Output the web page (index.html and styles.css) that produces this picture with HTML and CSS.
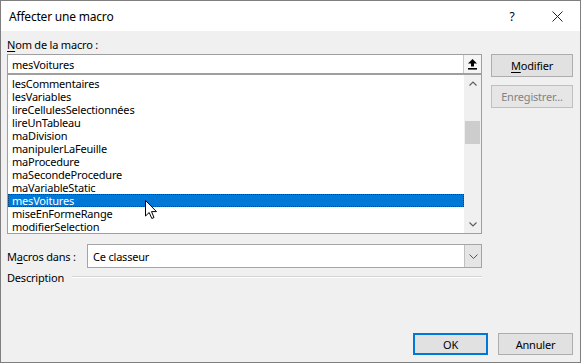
FILE: index.html
```html
<!DOCTYPE html>
<html lang="fr">
<head>
    <meta charset="UTF-8">
    <meta name="viewport" content="width=device-width, initial-scale=1.0">
    <title>Affecter une macro</title>
    <link rel="stylesheet" href="styles.css">
</head>
<body>
    <div class="dialog">
        <div class="titlebar">
            <span class="title">Affecter une macro</span>
            <span class="help">?</span>
            <span class="close">
                <svg width="11" height="11" viewBox="0 0 11 11"><path d="M0.5 0.5 L10.5 10.5 M10.5 0.5 L0.5 10.5" stroke="#222" stroke-width="1" fill="none"/></svg>
            </span>
        </div>

        <div class="content">
            <div class="main">
                <div class="left">
                    <div class="label"><u>N</u>om de la macro :</div>
                    <div class="name-input">
                        <span class="name-value">mesVoitures</span>
                        <span class="collapse-btn">
                            <svg width="9" height="11" viewBox="0 0 9 11"><path d="M4.5 0 L9 4.5 H6 V7.5 H3 V4.5 H0 Z" fill="#000"/><rect x="0" y="9" width="9" height="1.6" fill="#000"/></svg>
                        </span>
                    </div>
                    <div class="listbox">
                        <div class="items" id="macro-list"></div>
                        <div class="scrollbar">
                            <div class="sb-btn">
                                <svg width="8" height="5" viewBox="0 0 8 5"><path d="M0.5 4.5 L4 1 L7.5 4.5" stroke="#606060" stroke-width="1.2" fill="none"/></svg>
                            </div>
                            <div class="sb-track"><div class="sb-thumb"></div></div>
                            <div class="sb-btn">
                                <svg width="8" height="5" viewBox="0 0 8 5"><path d="M0.5 0.5 L4 4 L7.5 0.5" stroke="#606060" stroke-width="1.2" fill="none"/></svg>
                            </div>
                        </div>
                    </div>
                    <div class="macros-in">
                        <span class="macros-label">M<u>a</u>cros dans :</span>
                        <div class="combo">
                            <span class="combo-value">Ce classeur</span>
                            <span class="combo-btn">
                                <svg width="9" height="5" viewBox="0 0 9 5"><path d="M0.5 0.5 L4.5 4.5 L8.5 0.5" stroke="#555" stroke-width="1" fill="none"/></svg>
                            </span>
                        </div>
                    </div>
                    <div class="description">
                        <span>Description</span>
                        <span class="etched"></span>
                    </div>
                </div>
                <div class="right">
                    <button class="btn"><u>M</u>odifier</button>
                    <button class="btn disabled">Enregistrer...</button>
                </div>
            </div>
            <div class="footer">
                <button class="btn default">OK</button>
                <button class="btn">Annuler</button>
            </div>
        </div>

        <svg class="cursor" width="13" height="20" viewBox="0 0 13 20"><path d="M0.5 0.5 V16 L4.2 12.5 L6.8 18.5 L9 17.5 L6.5 11.6 L11.5 11.6 Z" fill="#fff" stroke="#000" stroke-width="1" stroke-linejoin="miter"/></svg>
    </div>

    <script>
        const macros = [
            'lesCommentaires',
            'lesVariables',
            'lireCellulesSelectionnées',
            'lireUnTableau',
            'maDivision',
            'manipulerLaFeuille',
            'maProcedure',
            'maSecondeProcedure',
            'maVariableStatic',
            'mesVoitures',
            'miseEnFormeRange',
            'modifierSelection'
        ];
        const selected = 'mesVoitures';
        const list = document.getElementById('macro-list');

        macros.forEach(name => {
            const row = document.createElement('div');
            row.className = name === selected ? 'item selected' : 'item';
            row.textContent = name;
            list.appendChild(row);
        });
    </script>
</body>
</html>
```

FILE: styles.css
```css
* {
    box-sizing: border-box;
}

body {
    margin: 0;
    font-family: "Noto Sans", "Liberation Sans", sans-serif;
    font-size: 11px;
    letter-spacing: -0.2px;
    color: #000;
}

u {
    text-decoration-thickness: 1px;
    text-underline-offset: 2px;
}

.dialog {
    position: relative;
    width: 581px;
    height: 363px;
    border: 1px solid #7f7f7f;
    background: #f0f0f0;
    display: flex;
    flex-direction: column;
    overflow: hidden;
}

.titlebar {
    height: 30px;
    background: #fff;
    display: flex;
    align-items: center;
    padding-left: 8px;
    flex-shrink: 0;
}

.title {
    font-size: 12px;
    flex: 1;
}

.help {
    width: 20px;
    text-align: center;
    font-size: 12px;
    margin-right: 25px;
}

.close {
    width: 20px;
    display: flex;
    justify-content: center;
    margin-right: 13px;
}

.content {
    flex: 1;
    display: flex;
    flex-direction: column;
    padding: 0 7px 7px 6px;
}

.main {
    flex: 1;
    display: flex;
    gap: 9px;
}

.left {
    width: 475px;
    display: flex;
    flex-direction: column;
}

.label {
    height: 16px;
    line-height: 16px;
    margin-top: 6px;
    margin-bottom: 1px;
}

.name-input {
    height: 20px;
    background: #fff;
    border: 1px solid #9f9f9f;
    display: flex;
    align-items: center;
    padding-left: 4px;
}

.name-value {
    flex: 1;
}

.collapse-btn {
    width: 18px;
    height: 18px;
    border-left: 1px solid #c8c8c8;
    background: #f5f5f5;
    display: flex;
    align-items: center;
    justify-content: center;
}

.listbox {
    height: 160px;
    background: #fff;
    border: 1px solid #9f9f9f;
    display: flex;
    overflow: hidden;
}

.items {
    flex: 1;
    padding-top: 2px;
    overflow: hidden;
}

.item {
    height: 13px;
    line-height: 13px;
    padding-left: 4px;
    white-space: nowrap;
}

.item.selected {
    background: #0078d7;
    color: #fff;
    outline: 1px dotted rgba(0, 0, 0, 0.45);
    outline-offset: -1px;
}

.scrollbar {
    width: 17px;
    background: #f0f0f0;
    display: flex;
    flex-direction: column;
}

.sb-btn {
    height: 17px;
    display: flex;
    align-items: center;
    justify-content: center;
}

.sb-track {
    flex: 1;
    padding-top: 29px;
}

.sb-thumb {
    width: 15px;
    height: 23px;
    margin-left: 1px;
    background: #cdcdcd;
}

.macros-in {
    display: flex;
    align-items: center;
    margin-top: 10px;
}

.macros-label {
    width: 80px;
}

.combo {
    flex: 1;
    height: 24px;
    background: #fff;
    border: 1px solid #a5a5a5;
    display: flex;
    align-items: center;
    padding-left: 5px;
}

.combo-value {
    flex: 1;
}

.combo-btn {
    width: 17px;
    height: 22px;
    background: #e5e5e5;
    border-left: 1px solid #c0c0c0;
    display: flex;
    align-items: center;
    justify-content: center;
}

.description {
    display: flex;
    align-items: center;
    height: 16px;
    margin-top: 1px;
}

.etched {
    flex: 1;
    height: 2px;
    margin-left: 8px;
    border-top: 1px solid #d5d5d5;
    border-bottom: 1px solid #fff;
}

.right {
    width: 82px;
    display: flex;
    flex-direction: column;
    gap: 8px;
    padding-top: 23px;
}

.btn {
    height: 23px;
    background: #e1e1e1;
    border: 1px solid #adadad;
    font-family: inherit;
    font-size: 11px;
    letter-spacing: -0.2px;
    color: #000;
    padding: 0;
}

.btn.disabled {
    color: #838383;
    border-color: #bfbfbf;
    background: #e6e6e6;
}

.footer {
    display: flex;
    justify-content: flex-end;
    gap: 10px;
}

.footer .btn {
    width: 75px;
    height: 22px;
}

.btn.default {
    border: 2px solid #0078d7;
}

.cursor {
    position: absolute;
    left: 144px;
    top: 199px;
}
```
